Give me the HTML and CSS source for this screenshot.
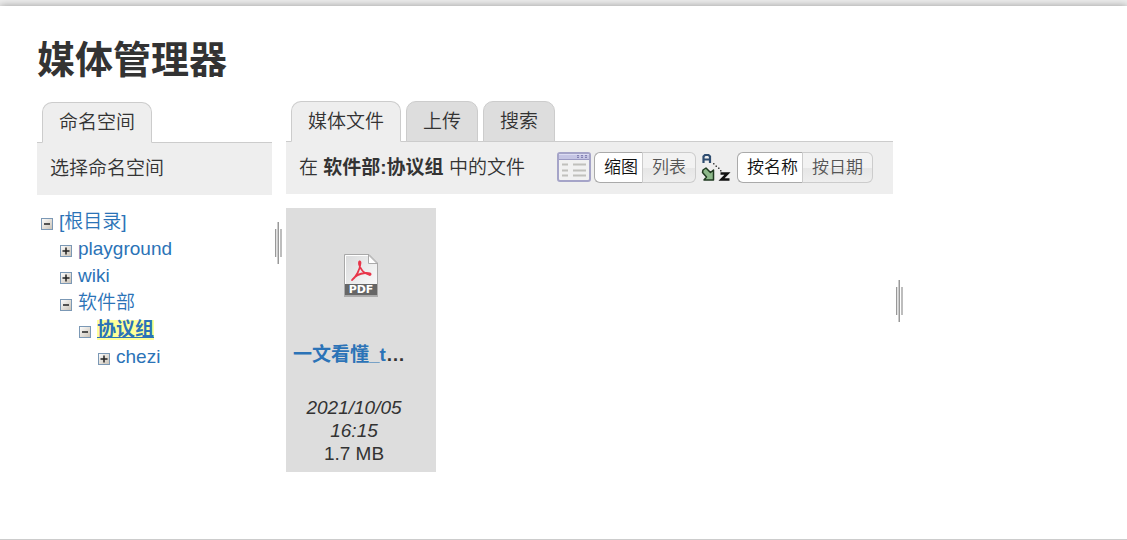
FILE: index.html
```html
<!DOCTYPE html>
<html lang="zh">
<head>
	<meta charset="UTF-8">
	<title>媒体管理器</title>
	<link rel="stylesheet" href="styles.css">
</head>
<body>
	<!-- 公用图标 -->
	<svg class="symbols" aria-hidden="true">
		<linearGradient id="boxBg" x1="0" y1="0" x2="1" y2="1">
			<stop offset="0" stop-color="#fff"/>
			<stop offset="1" stop-color="#c8c0b4"/>
		</linearGradient>
		<symbol id="minus" viewBox="0 0 12 12">
			<rect x="0.5" y="0.5" width="11" height="11" fill="url(#boxBg)" stroke="#7b98b5"/>
			<path d="M3 6h6" stroke="#222" stroke-width="1.500"/>
		</symbol>
		<symbol id="plus" viewBox="0 0 12 12">
			<rect x="0.5" y="0.5" width="11" height="11" fill="url(#boxBg)" stroke="#7b98b5"/>
			<path d="M2.500 6h7M6 2.500v7" stroke="#222" stroke-width="1.500"/>
		</symbol>
		<symbol id="grip" viewBox="0 0 7 42">
			<path d="M0.5 7v28" stroke="#999"/>
			<path d="M1.5 7v28" stroke="#e2e2e2"/>
			<path d="M2.5 0v42" stroke="#ccc"/>
			<path d="M3.5 0v42" stroke="#999"/>
			<path d="M6 7v28" stroke="#bdbdbd" stroke-width="2"/>
		</symbol>
	</svg>

	<div class="page">
		<h1>媒体管理器</h1>
		<div class="manager">
			<div class="panel namespaces">
				<ul class="tabs">
					<li><strong>命名空间</strong></li>
				</ul>
				<div class="panel-header">
					<h2>选择命名空间</h2>
				</div>
				<ul class="tree">
					<li>
						<div class="item"><button type="button" aria-label="收起"><svg><use href="#minus"/></svg></button><a href="#">[根目录]</a></div>
						<ul>
							<li><div class="item"><button type="button" aria-label="展开"><svg><use href="#plus"/></svg></button><a href="#">playground</a></div></li>
							<li><div class="item"><button type="button" aria-label="展开"><svg><use href="#plus"/></svg></button><a href="#">wiki</a></div></li>
							<li>
								<div class="item"><button type="button" aria-label="收起"><svg><use href="#minus"/></svg></button><a href="#">软件部</a></div>
								<ul>
									<li>
										<div class="item"><button type="button" aria-label="收起"><svg><use href="#minus"/></svg></button><a href="#" class="selected">协议组</a></div>
										<ul>
											<li><div class="item"><button type="button" aria-label="展开"><svg><use href="#plus"/></svg></button><a href="#">chezi</a></div></li>
										</ul>
									</li>
								</ul>
							</li>
						</ul>
					</li>
				</ul>
			</div>

			<div class="handle handle-left"><svg><use href="#grip"/></svg></div>

			<div class="panel filelist">
				<ul class="tabs">
					<li><strong>媒体文件</strong></li>
					<li><a href="#">上传</a></li>
					<li><a href="#">搜索</a></li>
				</ul>
				<div class="panel-header">
					<h2>在 <strong>软件部:协议组</strong> 中的文件</h2>
					<form class="options">
						<svg class="icon-view" viewBox="0 0 34 30">
							<rect x="1" y="1" width="32" height="28" rx="2" fill="#f1f1f1" stroke="#a5a4c8" stroke-width="2"/>
							<path d="M2 2h30v6H2z" fill="#c5c5e4"/>
							<path d="M2 2.5h30" stroke="#dcdcf2"/>
							<path d="M2 7.5h30" stroke="#9a99c2"/>
							<path d="M20 4.5h2M24 4.5h2M28 4.5h2" stroke="#8381b4" stroke-width="3"/>
							<path d="M20.5 4.5h1M24.5 4.5h1M28.5 4.5h1" stroke="#e6e6f6"/>
							<path d="M5 12.5h6M16 12.5h13M5 18.5h6M16 18.5h13M5 23.5h6M16 23.5h13" stroke="#c0c0bc" stroke-width="2"/>
						</svg>
						<div class="choices">
							<input type="radio" name="list" id="thumbs" checked><label for="thumbs">缩图</label>
							<input type="radio" name="list" id="rows"><label for="rows">列表</label>
						</div>
						<svg class="icon-sort" viewBox="0 0 30 30">
							<path d="M2.500 11V4.500L4 3H7.500L9 4.500V11M2.500 7.500h6" fill="none" stroke="#2f4d70" stroke-width="2.200"/>
							<path d="M12 11h1.500v1.500H12zM14.500 13.500H16V15h-1.500zM17 15.500h1.500V17H17zM19 18h1.500v1.500H19z" fill="#444"/>
							<path d="M2 18l3-2 4.500 4.500L12.500 18V28H3l2.500-3L1.500 20.500z" fill="#8db98a" stroke="#1f3a20" stroke-width="1.500" stroke-linejoin="round"/>
							<path d="M19.500 21.500h7L20.500 27.500h8" fill="none" stroke="#111" stroke-width="2.500"/>
						</svg>
						<div class="choices">
							<input type="radio" name="sort" id="byname" checked><label for="byname">按名称</label>
							<input type="radio" name="sort" id="bydate"><label for="bydate">按日期</label>
						</div>
					</form>
				</div>
				<ul class="thumbs">
					<li>
						<a href="#" class="preview" aria-label="PDF">
							<svg viewBox="0 0 36 45">
								<defs>
									<linearGradient id="sheet" x1="0" y1="0" x2="1" y2="1">
										<stop offset="0" stop-color="#d9dadb"/>
										<stop offset="1" stop-color="#fff"/>
									</linearGradient>
								</defs>
								<rect x="1" y="41" width="34" height="3" fill="#aaa"/>
								<path d="M1.500 1.500H26L34.500 10V42.500H1.500z" fill="url(#sheet)" stroke="#a8a8a8"/>
								<path d="M2.500 31V2.500H25" fill="none" stroke="#fff"/>
								<path d="M25.500 2v8.500H34z" fill="#fff" stroke="#aaa"/>
								<path d="M2 31h32v11H2z" fill="#666"/>
								<path d="M9 27C13 24 17 17 17.500 10C17.500 7.500 15.500 8 16 11C17 16 21 21 27 22C29 21 26 19.500 22 20C17 20.500 12 23 9 27z" fill="none" stroke="#e8364a" stroke-width="1.800" stroke-linejoin="round"/>
								<text class="kind" x="18" y="40" text-anchor="middle">PDF</text>
							</svg>
						</a>
						<div class="name"><a href="#">一文看懂_t</a>…</div>
						<div class="date">2021/10/05 16:15</div>
						<div class="size">1.7 MB</div>
					</li>
				</ul>
			</div>

			<div class="handle handle-right"><svg><use href="#grip"/></svg></div>

			<div class="panel file"></div>
		</div>
	</div>
</body>
</html>
```
FILE: styles.css
```css
*{
	box-sizing:border-box;
}

body{
	margin:0;
	background:#eee;
	color:#333;
	font-family:"Liberation Sans","Noto Sans CJK SC",sans-serif;
	font-size:19px;
	font-weight:350;
	line-height:27px;
}

ul{
	list-style:none;
	margin:0;
	padding:0;
}

h1,h2{
	margin:0;
}

a{
	color:#2b73b7;
	text-decoration:none;
}

a:hover{
	text-decoration:underline;
}

.symbols{
	position:absolute;
	width:0;
	height:0;
}

.page{
	margin-top:6px;
	padding:32px 37px 67px;
	background:#fff;
	border-bottom:1px solid #ccc;
	box-shadow:0 0 8px #999;
}

h1{
	margin-bottom:19px;
	font-size:38px;
	line-height:44px;
}

.manager{
	display:grid;
	grid-template-columns:235fr 14px 607fr 14px 183fr;
}

.namespaces{
	padding-top:1px;
}

/* 标签页 */
.tabs{
	display:flex;
	gap:5px;
	padding:0 5px;
}

.tabs li{
	margin-bottom:-1px;
}

.tabs strong,
.tabs a{
	display:block;
	height:41px;
	padding:0 16px;
	border:1px solid #ccc;
	border-radius:10px 10px 0 0;
	background:#ddd;
	color:#333;
	font-weight:350;
	line-height:39px;
}

.tabs strong{
	position:relative;
	border-bottom-color:#eee;
	background:#eee;
}

.panel-header{
	display:flex;
	align-items:center;
	justify-content:space-between;
	height:53px;
	padding:0 20px 2px 13px;
	border-top:1px solid #ccc;
	background:#eee;
	white-space:nowrap;
}

h2{
	font-size:19px;
	font-weight:350;
	line-height:27px;
}

h2 strong{
	font-weight:bold;
}

/* 目录树 */
.tree{
	padding:13px 0 0 4px;
}

.tree ul{
	padding-left:19px;
}

.item{
	display:flex;
	align-items:center;
	gap:6px;
	height:27px;
}

.item button{
	display:block;
	width:12px;
	height:12px;
	margin-top:4px;
	padding:0;
	border:0;
	background:none;
}

.item svg{
	display:block;
	width:12px;
	height:12px;
}

.selected{
	background:#ff9;
	font-weight:bold;
	line-height:20px;
	text-decoration:underline;
}

.handle svg{
	display:block;
	width:7px;
	height:42px;
	margin-left:3px;
}

.handle-left{
	padding-top:121px;
}

.handle-right{
	padding-top:179px;
}

/* 显示和排序选项 */
.options{
	display:flex;
	align-items:center;
}

.icon-view{
	width:34px;
	height:30px;
	margin-right:3px;
}

.icon-sort{
	width:30px;
	height:30px;
	margin:0 6px 0 5px;
}

.choices{
	display:flex;
	height:31px;
	font-size:17px;
	line-height:29px;
}

.choices input{
	position:absolute;
	opacity:0;
	pointer-events:none;
}

.choices label{
	padding:0 9px;
	border:1px solid #ccc;
	border-left-width:0;
	border-radius:0 6px 6px 0;
	background:linear-gradient(#f2f2f2 50%,#e6e6e6 50%,#eee);
	color:#555;
}

.choices label:first-of-type{
	padding-right:4px;
	border-left-width:1px;
	border-radius:6px 0 0 6px;
}

.choices input:checked + label{
	border-color:#aaa;
	border-right-color:#ccc;
	background:#fff;
	color:#111;
}

/* 缩略图 */
.thumbs{
	display:flex;
	flex-wrap:wrap;
	margin-top:14px;
}

.thumbs li{
	width:150px;
	padding:7px;
	background:#ddd;
	line-height:23px;
}

.preview{
	display:flex;
	align-items:center;
	justify-content:center;
	height:128px;
	padding-bottom:8px;
}

.preview svg{
	width:36px;
	height:45px;
}

.kind{
	fill:#fff;
	font-family:"DejaVu Sans",sans-serif;
	font-size:11px;
	font-weight:bold;
}

.name{
	margin-bottom:30px;
	font-weight:bold;
	white-space:nowrap;
}

.date,
.size{
	margin-right:14px;
	text-align:center;
}

.date{
	font-style:italic;
}
```
